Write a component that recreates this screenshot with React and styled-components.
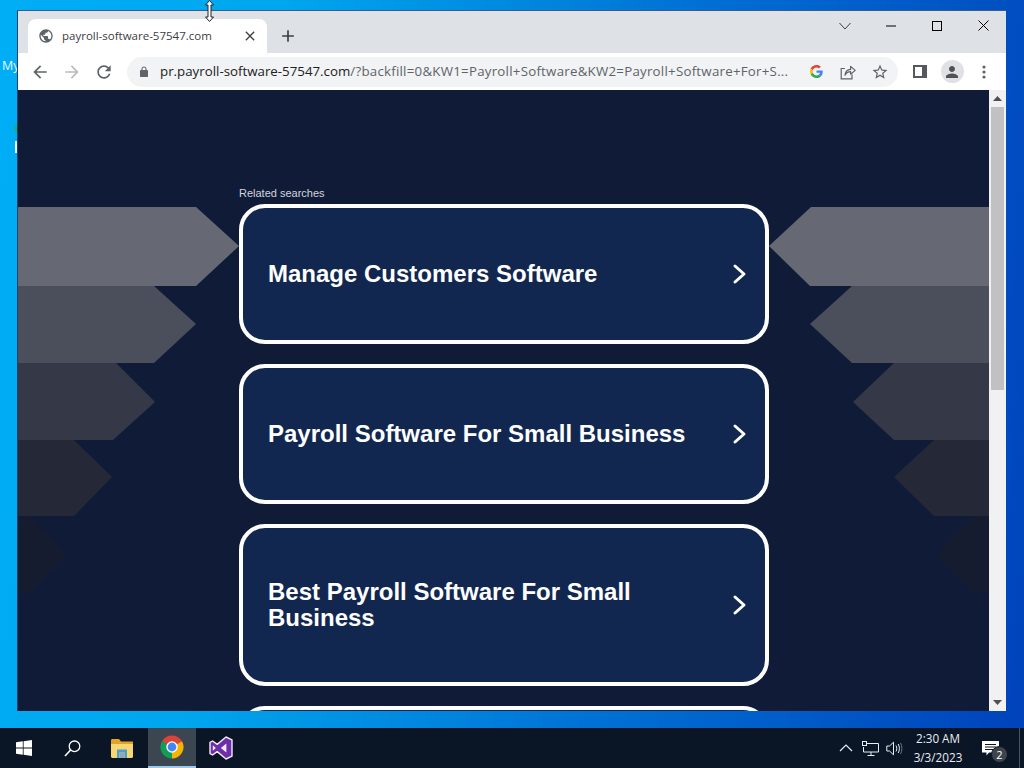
import React from 'react';
import styled, { createGlobalStyle } from 'styled-components';

const GlobalStyle = createGlobalStyle`
  html, body {
    margin: 0;
    padding: 0;
    overflow: hidden;
  }
  * {
    box-sizing: border-box;
  }
`;

const UI_FONT = `'Open Sans', 'Noto Sans', sans-serif`;

const Desktop = styled.div`
  width: 1024px;
  height: 768px;
  display: flex;
  flex-direction: column;
  position: relative;
  overflow: hidden;
  background: linear-gradient(98deg, #00aef6 0%, #00a6ee 25%, #0070d4 62%, #0042ba 100%);
`;

const WindowRow = styled.div`
  height: 728px;
  display: flex;
  padding-top: 10px;
`;

const DesktopEdge = styled.div`
  width: 17px;
  display: flex;
  flex-direction: column;
`;

const EdgeLabel = styled.span`
  margin: 47px 0 0 2px;
  font-family: ${UI_FONT};
  font-size: 12.5px;
  line-height: 18px;
  color: #e4f6ff;
`;

const EdgeMark = styled.div`
  width: 2px;
  margin: ${(p) => p.$top}px 0 0 15px;
  height: ${(p) => p.$height}px;
  background: ${(p) => p.$color};
`;

const Window = styled.div`
  width: 989px;
  height: 701px;
  display: flex;
  flex-direction: column;
  border-top: 1px solid #3f5a86;
  border-left: 1px solid #20406a;
`;

const TabStrip = styled.div`
  height: 42px;
  display: flex;
  align-items: flex-end;
  background: #dee1e6;
  padding-left: 10px;
`;

const Tab = styled.div`
  width: 239px;
  height: 34px;
  display: flex;
  align-items: center;
  padding: 0 9px 0 10px;
  background: #fff;
  border-radius: 8px 8px 0 0;
`;

const TabTitle = styled.span`
  flex: 1;
  margin: 0 0 1px 8px;
  font-family: ${UI_FONT};
  font-size: 11.5px;
  color: #3c4043;
  white-space: nowrap;
`;

const NewTab = styled.div`
  width: 28px;
  height: 34px;
  margin-left: 7px;
  display: flex;
  align-items: center;
  justify-content: center;
`;

const Captions = styled.div`
  margin-left: auto;
  align-self: flex-start;
  display: flex;
`;

const CaptionButton = styled.div`
  width: 46px;
  height: 29px;
  display: flex;
  align-items: center;
  justify-content: center;
`;

const Toolbar = styled.div`
  height: 37px;
  display: flex;
  align-items: center;
  padding: 0 6px 0 6px;
  background: #fff;
`;

const ToolButton = styled.div`
  width: 32px;
  height: 30px;
  flex: none;
  display: flex;
  align-items: center;
  justify-content: center;
`;

const Omnibox = styled.div`
  width: 771px;
  height: 30px;
  margin: 0 6px 0 7px;
  display: flex;
  align-items: center;
  padding: 0 2px 0 9px;
  background: #f1f3f4;
  border-radius: 15px;
`;

const LockSlot = styled.div`
  width: 16px;
  flex: none;
  display: flex;
  justify-content: center;
`;

const Url = styled.div`
  flex: 1;
  min-width: 0;
  margin: 0 0 2px 8px;
  font-family: ${UI_FONT};
  font-size: 13.3px;
  color: #5f6368;
  white-space: nowrap;
`;

const UrlHost = styled.span`
  color: #202124;
`;

const UrlPath = styled.span`
  letter-spacing: 0.24px;
`;

const Avatar = styled.div`
  width: 23px;
  height: 23px;
  border-radius: 50%;
  background: #dfe1e5;
  display: flex;
  align-items: center;
  justify-content: center;
`;

const Viewport = styled.div`
  flex: 1;
  min-height: 0;
  display: flex;
`;

const Page = styled.div`
  width: 971px;
  display: grid;
  grid-template-columns: 221px 530px 220px;
  overflow: hidden;
  background: #101c37;
`;

const Decor = styled.svg`
  display: block;
`;

const Results = styled.div`
  display: flex;
  flex-direction: column;
  padding-top: 96px;
`;

const RelatedLabel = styled.div`
  height: 14px;
  font-family: 'Liberation Sans', Arial, sans-serif;
  font-size: 11px;
  line-height: 14px;
  color: #d0d4de;
`;

const Cards = styled.div`
  margin-top: 4px;
  display: flex;
  flex-direction: column;
  gap: 20px;
`;

const Card = styled.div`
  min-height: 140px;
  flex: none;
  display: flex;
  align-items: center;
  justify-content: space-between;
  padding: 51px 17px 51px 25px;
  background: #112750;
  border: 4px solid #fff;
  border-radius: 26px;
`;

const CardTitle = styled.span`
  max-width: 440px;
  font-family: 'Liberation Sans', Arial, sans-serif;
  font-size: 24px;
  font-weight: 700;
  line-height: 26px;
  color: #fff;
`;

const Scrollbar = styled.div`
  width: 17px;
  display: flex;
  flex-direction: column;
  align-items: center;
  background: #f1f1f1;
`;

const ScrollArrow = styled.div`
  height: 17px;
  flex: none;
  display: flex;
  align-items: center;
  justify-content: center;
`;

const ScrollTrack = styled.div`
  flex: 1;
  width: 100%;
  padding: 0 2px;
`;

const ScrollThumb = styled.div`
  height: 283px;
  background: #c1c1c1;
`;

const Taskbar = styled.div`
  height: 40px;
  display: flex;
  align-items: stretch;
  background: #0a1526;
`;

const TaskCell = styled.div`
  width: ${(p) => p.$width}px;
  flex: none;
  display: flex;
  align-items: center;
  justify-content: center;
  background: ${(p) => (p.$active ? '#3c4651' : 'transparent')};
  border-bottom: ${(p) => (p.$active ? '2px solid #9cc8ec' : 'none')};
`;

const Tray = styled.div`
  margin-left: auto;
  display: flex;
  align-items: stretch;
`;

const Clock = styled.div`
  width: 66px;
  display: flex;
  flex-direction: column;
  align-items: center;
  justify-content: center;
  font-family: ${UI_FONT};
  font-size: 11.7px;
  line-height: 19px;
  color: #e8edf2;
`;

const NotifyCell = styled.div`
  width: 48px;
  position: relative;
  display: flex;
  align-items: center;
  padding-left: 11px;
`;

const NotifyBadge = styled.span`
  position: absolute;
  left: 20px;
  top: 18px;
  width: 17px;
  height: 17px;
  border-radius: 50%;
  background: #3f444b;
  border: 1px solid #0a1526;
  font-family: ${UI_FONT};
  font-size: 11px;
  line-height: 15px;
  text-align: center;
  color: #fff;
`;

const ShowDesktop = styled.div`
  width: 5px;
  border-left: 1px solid #4a5360;
`;

const Cursor = styled.svg`
  position: absolute;
  left: 204px;
  top: 0;
`;

const leftShapes = [
  { color: '#666974', points: '0,117 178,117 221,156 178,196 0,196' },
  { color: '#4b4e5b', points: '0,196 136,196 178,234 136,273 0,273' },
  { color: '#353846', points: '0,273 98,273 137,312 95,350 0,350' },
  { color: '#252937', points: '0,350 56,350 94,387 56,426 0,426' },
  { color: '#161c30', points: '0,426 12,426 48,465 12,503 0,503' },
];

const rightShapes = [
  { color: '#666974', points: '0,156 42,117 220,117 220,196 41,196' },
  { color: '#4b4e5b', points: '41,234 83,196 220,196 220,273 83,273' },
  { color: '#353846', points: '84,312 125,273 220,273 220,350 125,350' },
  { color: '#252937', points: '125,387 165,350 220,350 220,426 165,426' },
  { color: '#161c30', points: '168,465 205,426 220,426 220,503 205,503' },
];

const cards = [
  'Manage Customers Software',
  'Payroll Software For Small Business',
  'Best Payroll Software For Small Business',
];

const MaterialIcon = ({ d, size = 20, color = '#5f6368' }) => (
  <svg width={size} height={size} viewBox="0 0 24 24" fill={color}>
    <path d={d} />
  </svg>
);

const CardChevron = () => (
  <svg width="16" height="22" viewBox="0 0 16 22" fill="none">
    <path d="M3 3L12 11L3 19" stroke="#fff" strokeWidth="3" strokeLinecap="round" strokeLinejoin="round" />
  </svg>
);

const GoogleG = () => (
  <svg width="13" height="13" viewBox="0 0 48 48">
    <path fill="#EA4335" d="M24 9.5c3.54 0 6.71 1.22 9.21 3.6l6.85-6.85C35.9 2.38 30.47 0 24 0 14.62 0 6.51 5.38 2.56 13.22l7.98 6.19C12.43 13.72 17.74 9.5 24 9.5z" />
    <path fill="#4285F4" d="M46.98 24.55c0-1.57-.15-3.09-.38-4.55H24v9.02h12.94c-.58 2.96-2.26 5.48-4.78 7.18l7.73 6c4.51-4.18 7.09-10.36 7.09-17.65z" />
    <path fill="#FBBC05" d="M10.53 28.59c-.48-1.45-.76-2.99-.76-4.59s.27-3.14.76-4.59l-7.98-6.19C.92 16.46 0 20.12 0 24c0 3.88.92 7.54 2.56 10.78l7.97-6.19z" />
    <path fill="#34A853" d="M24 48c6.48 0 11.93-2.13 15.89-5.81l-7.73-6c-2.15 1.45-4.92 2.3-8.16 2.3-6.26 0-11.57-4.22-13.47-9.91l-7.98 6.19C6.51 42.62 14.62 48 24 48z" />
  </svg>
);

const ShareIcon = () => (
  <svg width="16" height="16" viewBox="0 0 16 16" fill="none" stroke="#5f6368" strokeWidth="1.2">
    <path d="M5 4.5H1.2V14.8H12V10.5" />
    <path d="M5 11.2C5.4 7.5 8 5.6 10.6 5.4V2.4L15.2 6.4L10.6 10.2V7.6C8.4 7.6 6.4 8.8 5 11.2Z" strokeLinejoin="round" />
  </svg>
);

const SidePanelIcon = () => (
  <svg width="14" height="13" viewBox="0 0 14 13">
    <rect width="14" height="13" fill="#55585c" />
    <rect x="2" y="2" width="7" height="9" fill="#fff" />
  </svg>
);

const WindowsLogo = () => (
  <svg width="16" height="16" viewBox="0 0 16 16" fill="#fff">
    <path d="M0 2.3L6.8 1.3V7.6H0Z" />
    <path d="M7.6 1.2L16 0V7.6H7.6Z" />
    <path d="M0 8.4H6.8V14.7L0 13.7Z" />
    <path d="M7.6 8.4H16V16L7.6 14.8Z" />
  </svg>
);

const SearchGlyph = () => (
  <svg width="17" height="17" viewBox="0 0 17 17" fill="none" stroke="#fff" strokeWidth="1.3">
    <circle cx="10.5" cy="6.3" r="5.3" />
    <path d="M6.6 10L1 16" strokeWidth="1.6" />
  </svg>
);

const FolderIcon = () => (
  <svg width="22" height="19" viewBox="0 0 22 19">
    <path fill="#e0a526" d="M0 1.5C0 .7.5 0 1.3 0H8l2 2.5H22V6H0Z" />
    <path fill="#f7d774" d="M0 5H22V17.6C22 18.4 21.5 19 20.7 19H1.3C.5 19 0 18.4 0 17.6Z" />
    <path fill="#4a9fd0" d="M6 10.5H16V19H13.5V13.5H8.5V19H6Z" />
    <path fill="#8fa8b8" d="M8.5 13.5H13.5V19H8.5Z" />
  </svg>
);

const ChromeLogo = () => (
  <svg width="24" height="24" viewBox="0 0 48 48">
    <path fill="#db4437" d="M24 24L4.08 12.5A23 23 0 0 1 43.92 12.5Z" />
    <path fill="#f4b400" d="M24 24L43.92 12.5A23 23 0 0 1 24 47Z" />
    <path fill="#0f9d58" d="M24 24L24 47A23 23 0 0 1 4.08 12.5Z" />
    <circle cx="24" cy="24" r="11.5" fill="#fff" />
    <circle cx="24" cy="24" r="8.8" fill="#4285f4" />
  </svg>
);

const StudioLogo = () => (
  <svg width="24" height="24" viewBox="0 0 24 24">
    <path
      fill="#6c2fa8"
      stroke="#f2eaf8"
      strokeWidth="1.4"
      strokeLinejoin="round"
      d="M17 1L23 3.8V20.2L17 23L8.2 15.6L3.6 19L1 17.6V6.4L3.6 5L8.2 8.4Z"
    />
    <path fill="#f2eaf8" d="M17.4 7.6V16.4L11.8 12Z" />
    <path fill="#f2eaf8" d="M3.8 9.2V14.8L6.8 12Z" />
  </svg>
);

const TrayChevron = () => (
  <svg width="14" height="8" viewBox="0 0 14 8" fill="none" stroke="#e8edf2" strokeWidth="1.2">
    <path d="M1 7L7 1L13 7" />
  </svg>
);

const NetworkGlyph = () => (
  <svg width="17" height="15" viewBox="0 0 17 15" fill="none" stroke="#e8edf2" strokeWidth="1">
    <path d="M5 2.5H16.5V11H1.5V6" />
    <path d="M9 11V14M5.5 14.5H12.5" />
    <rect x=".5" y=".5" width="4" height="4" />
  </svg>
);

const SpeakerGlyph = () => (
  <svg width="17" height="15" viewBox="0 0 17 15" fill="none" stroke="#e8edf2" strokeWidth="1">
    <path d="M.8 5H3.5L7.5 1.2V13.8L3.5 10H.8Z" />
    <path d="M10 4.5C11 6.2 11 8.8 10 10.5" />
    <path d="M12.2 3C13.8 5.5 13.8 9.5 12.2 12" />
    <path d="M14.5 2C16.4 5 16.4 10 14.5 13" stroke="#6f7883" />
  </svg>
);

const NotifyGlyph = () => (
  <svg width="17" height="15" viewBox="0 0 17 15">
    <path fill="#fff" d="M0 0H17V11.5H7L4.5 14.5V11.5H0Z" />
    <path stroke="#0a1526" strokeWidth="1" d="M3 3.5H14M3 6H14M3 8.5H11" />
  </svg>
);

const App = () => {
  return (
    <>
      <GlobalStyle />
      <Desktop>
        <WindowRow>
          <DesktopEdge>
            <EdgeLabel>My</EdgeLabel>
            <EdgeMark $top={50} $height={8} $color="#1fae6a" />
            <EdgeMark $top={8} $height={12} $color="#e8f4fb" />
          </DesktopEdge>
          <Window>
            <TabStrip>
              <Tab>
                <MaterialIcon
                  size={16}
                  d="M12 2C6.48 2 2 6.48 2 12s4.48 10 10 10 10-4.48 10-10S17.52 2 12 2zm-1 17.93c-3.95-.49-7-3.85-7-7.93 0-.62.08-1.21.21-1.79L9 15v1c0 1.1.9 2 2 2v1.93zm6.9-2.54c-.26-.81-1-1.39-1.9-1.39h-1v-3c0-.55-.45-1-1-1H8v-2h2c.55 0 1-.45 1-1V7h2c1.1 0 2-.9 2-2v-.41c2.93 1.19 5 4.06 5 7.41 0 2.08-.8 3.97-2.1 5.39z"
                />
                <TabTitle>payroll-software-57547.com</TabTitle>
                <MaterialIcon
                  size={16}
                  color="#3c4043"
                  d="M19 6.41L17.59 5 12 10.59 6.41 5 5 6.41 10.59 12 5 17.59 6.41 19 12 13.41 17.59 19 19 17.59 13.41 12z"
                />
              </Tab>
              <NewTab>
                <MaterialIcon size={20} color="#3c4043" d="M19 13h-6v6h-2v-6H5v-2h6V5h2v6h6v2z" />
              </NewTab>
              <Captions>
                <CaptionButton>
                  <svg width="12" height="8" viewBox="0 0 12 8" fill="none" stroke="#3c4043">
                    <path d="M.5 1L6 7L11.5 1" />
                  </svg>
                </CaptionButton>
                <CaptionButton>
                  <svg width="10" height="2" viewBox="0 0 10 2" stroke="#000">
                    <path d="M0 1H10" />
                  </svg>
                </CaptionButton>
                <CaptionButton>
                  <svg width="10" height="10" viewBox="0 0 10 10" fill="none" stroke="#000">
                    <rect x=".5" y=".5" width="9" height="9" />
                  </svg>
                </CaptionButton>
                <CaptionButton>
                  <svg width="11" height="11" viewBox="0 0 11 11" fill="none" stroke="#000">
                    <path d="M.5 .5L10.5 10.5M10.5 .5L.5 10.5" />
                  </svg>
                </CaptionButton>
              </Captions>
            </TabStrip>
            <Toolbar>
              <ToolButton>
                <MaterialIcon d="M20 11H7.83l5.59-5.59L12 4l-8 8 8 8 1.41-1.41L7.83 13H20v-2z" />
              </ToolButton>
              <ToolButton>
                <MaterialIcon color="#b9bcc0" d="M12 4l-1.41 1.41L16.17 11H4v2h12.17l-5.58 5.59L12 20l8-8z" />
              </ToolButton>
              <ToolButton>
                <MaterialIcon d="M17.65 6.35C16.2 4.9 14.21 4 12 4c-4.42 0-7.99 3.58-7.99 8s3.57 8 7.99 8c3.73 0 6.84-2.55 7.73-6h-2.08c-.82 2.33-3.04 4-5.65 4-3.31 0-6-2.69-6-6s2.69-6 6-6c1.66 0 3.14.69 4.22 1.78L13 11h7V4l-2.35 2.35z" />
              </ToolButton>
              <Omnibox>
                <LockSlot>
                  <MaterialIcon
                    size={12}
                    d="M18 8h-1V6c0-2.76-2.24-5-5-5S7 3.24 7 6v2H6c-1.1 0-2 .9-2 2v10c0 1.1.9 2 2 2h12c1.1 0 2-.9 2-2V10c0-1.1-.9-2-2-2zM9 6c0-1.66 1.34-3 3-3s3 1.34 3 3v2H9V6z"
                  />
                </LockSlot>
                <Url>
                  <UrlHost>pr.payroll-software-57547.com</UrlHost>
                  <UrlPath>/?backfill=0&amp;KW1=Payroll+Software&amp;KW2=Payroll+Software+For+S...</UrlPath>
                </Url>
                <ToolButton>
                  <GoogleG />
                </ToolButton>
                <ToolButton>
                  <ShareIcon />
                </ToolButton>
                <ToolButton>
                  <MaterialIcon
                    size={18}
                    d="M22 9.24l-7.19-.62L12 2 9.19 8.63 2 9.24l5.46 4.73L5.82 21 12 17.27 18.18 21l-1.63-7.03L22 9.24zM12 15.4l-3.76 2.27 1-4.28-3.32-2.88 4.38-.38L12 6.1l1.71 4.04 4.38.38-3.32 2.88 1 4.28L12 15.4z"
                  />
                </ToolButton>
              </Omnibox>
              <ToolButton>
                <SidePanelIcon />
              </ToolButton>
              <ToolButton>
                <Avatar>
                  <MaterialIcon
                    size={18}
                    color="#4f5357"
                    d="M12 12c2.21 0 4-1.79 4-4s-1.79-4-4-4-4 1.79-4 4 1.79 4 4 4zm0 2c-2.67 0-8 1.34-8 4v2h16v-2c0-2.66-5.33-4-8-4z"
                  />
                </Avatar>
              </ToolButton>
              <ToolButton>
                <svg width="4" height="14" viewBox="0 0 4 14" fill="#5f6368">
                  <circle cx="2" cy="2" r="1.6" />
                  <circle cx="2" cy="7" r="1.6" />
                  <circle cx="2" cy="12" r="1.6" />
                </svg>
              </ToolButton>
            </Toolbar>
            <Viewport>
              <Page>
                <Decor width="221" height="621" viewBox="0 0 221 621">
                  {leftShapes.map((shape) => (
                    <polygon key={shape.points} points={shape.points} fill={shape.color} />
                  ))}
                </Decor>
                <Results>
                  <RelatedLabel>Related searches</RelatedLabel>
                  <Cards>
                    {cards.map((title) => (
                      <Card key={title}>
                        <CardTitle>{title}</CardTitle>
                        <CardChevron />
                      </Card>
                    ))}
                    <Card />
                  </Cards>
                </Results>
                <Decor width="220" height="621" viewBox="0 0 220 621">
                  {rightShapes.map((shape) => (
                    <polygon key={shape.points} points={shape.points} fill={shape.color} />
                  ))}
                </Decor>
              </Page>
              <Scrollbar>
                <ScrollArrow>
                  <svg width="9" height="5" viewBox="0 0 9 5" fill="#505050">
                    <path d="M4.5 0L9 5H0Z" />
                  </svg>
                </ScrollArrow>
                <ScrollTrack>
                  <ScrollThumb />
                </ScrollTrack>
                <ScrollArrow>
                  <svg width="9" height="5" viewBox="0 0 9 5" fill="#505050">
                    <path d="M0 0H9L4.5 5Z" />
                  </svg>
                </ScrollArrow>
              </Scrollbar>
            </Viewport>
          </Window>
        </WindowRow>
        <Taskbar>
          <TaskCell $width={48}>
            <WindowsLogo />
          </TaskCell>
          <TaskCell $width={48}>
            <SearchGlyph />
          </TaskCell>
          <TaskCell $width={52}>
            <FolderIcon />
          </TaskCell>
          <TaskCell $width={48} $active>
            <ChromeLogo />
          </TaskCell>
          <TaskCell $width={49}>
            <StudioLogo />
          </TaskCell>
          <Tray>
            <TaskCell $width={22}>
              <TrayChevron />
            </TaskCell>
            <TaskCell $width={26}>
              <NetworkGlyph />
            </TaskCell>
            <TaskCell $width={22}>
              <SpeakerGlyph />
            </TaskCell>
            <Clock>
              <span>2:30 AM</span>
              <span>3/3/2023</span>
            </Clock>
            <NotifyCell>
              <NotifyGlyph />
              <NotifyBadge>2</NotifyBadge>
            </NotifyCell>
            <ShowDesktop />
          </Tray>
        </Taskbar>
        <Cursor width="11" height="22" viewBox="0 0 11 22">
          <path
            fill="#fff"
            stroke="#222"
            strokeWidth="1"
            d="M5.5 .5L9.5 5H7V17H9.5L5.5 21.5L1.5 17H4V5H1.5Z"
          />
        </Cursor>
      </Desktop>
    </>
  );
};

export default App;
